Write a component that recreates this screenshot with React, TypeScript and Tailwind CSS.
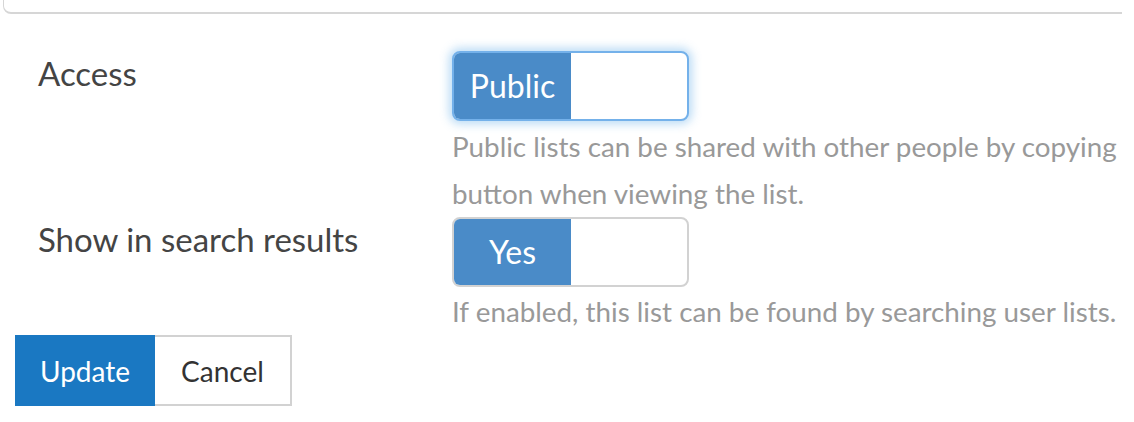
import type { ReactNode } from 'react';

function Toggle({ label, focused }: { label: string; focused?: boolean }) {
  return (
    <div
      className={`flex h-[70px] w-[237px] overflow-hidden rounded-[8px] border-2 bg-white ${
        focused
          ? 'border-[#74b1ea] shadow-[0_0_10px_3px_rgba(102,175,233,0.45)]'
          : 'border-[#d2d2d2]'
      }`}
    >
      <span className="flex w-[117px] items-center justify-center bg-[#4a8bc8] text-[32px] text-white">
        {label}
      </span>
      <span className="flex-1" />
    </div>
  );
}

function Row({ label, children }: { label: string; children: ReactNode }) {
  return (
    <div className="flex pl-[38px]">
      <div className="w-[414px] text-[33px] leading-[44px] text-[#444]">{label}</div>
      <div>{children}</div>
    </div>
  );
}

export default function App() {
  return (
    <div className="min-h-screen bg-white font-['Lato','Liberation_Sans',sans-serif]">
      {/* bottom edge of the field above */}
      <div className="ml-[3px] mr-[12px] h-[14px] rounded-bl-[8px] border-b-2 border-l border-[#d6d6d6]" />

      <div className="pt-[37px]">
        <Row label="Access">
          <Toggle label="Public" focused />
          <p className="mt-[2px] whitespace-nowrap text-[27.8px] leading-[47px] text-[#999]">
            Public lists can be shared with other people by copying
            <br />
            button when viewing the list.
          </p>
        </Row>
        <Row label="Show in search results">
          <Toggle label="Yes" />
          <p className="mt-[1px] whitespace-nowrap text-[27.8px] leading-[47px] text-[#999]">
            If enabled, this list can be found by searching user lists.
          </p>
        </Row>
      </div>

      <div className="flex pl-[15px]">
        <button className="h-[71px] w-[140px] border-2 border-[#1a78c2] bg-[#1a78c2] text-[28px] text-white">
          Update
        </button>
        <button className="h-[71px] w-[137px] border-2 border-l-0 border-[#d2d2d2] bg-white text-[28px] text-[#333]">
          Cancel
        </button>
      </div>
    </div>
  );
}
